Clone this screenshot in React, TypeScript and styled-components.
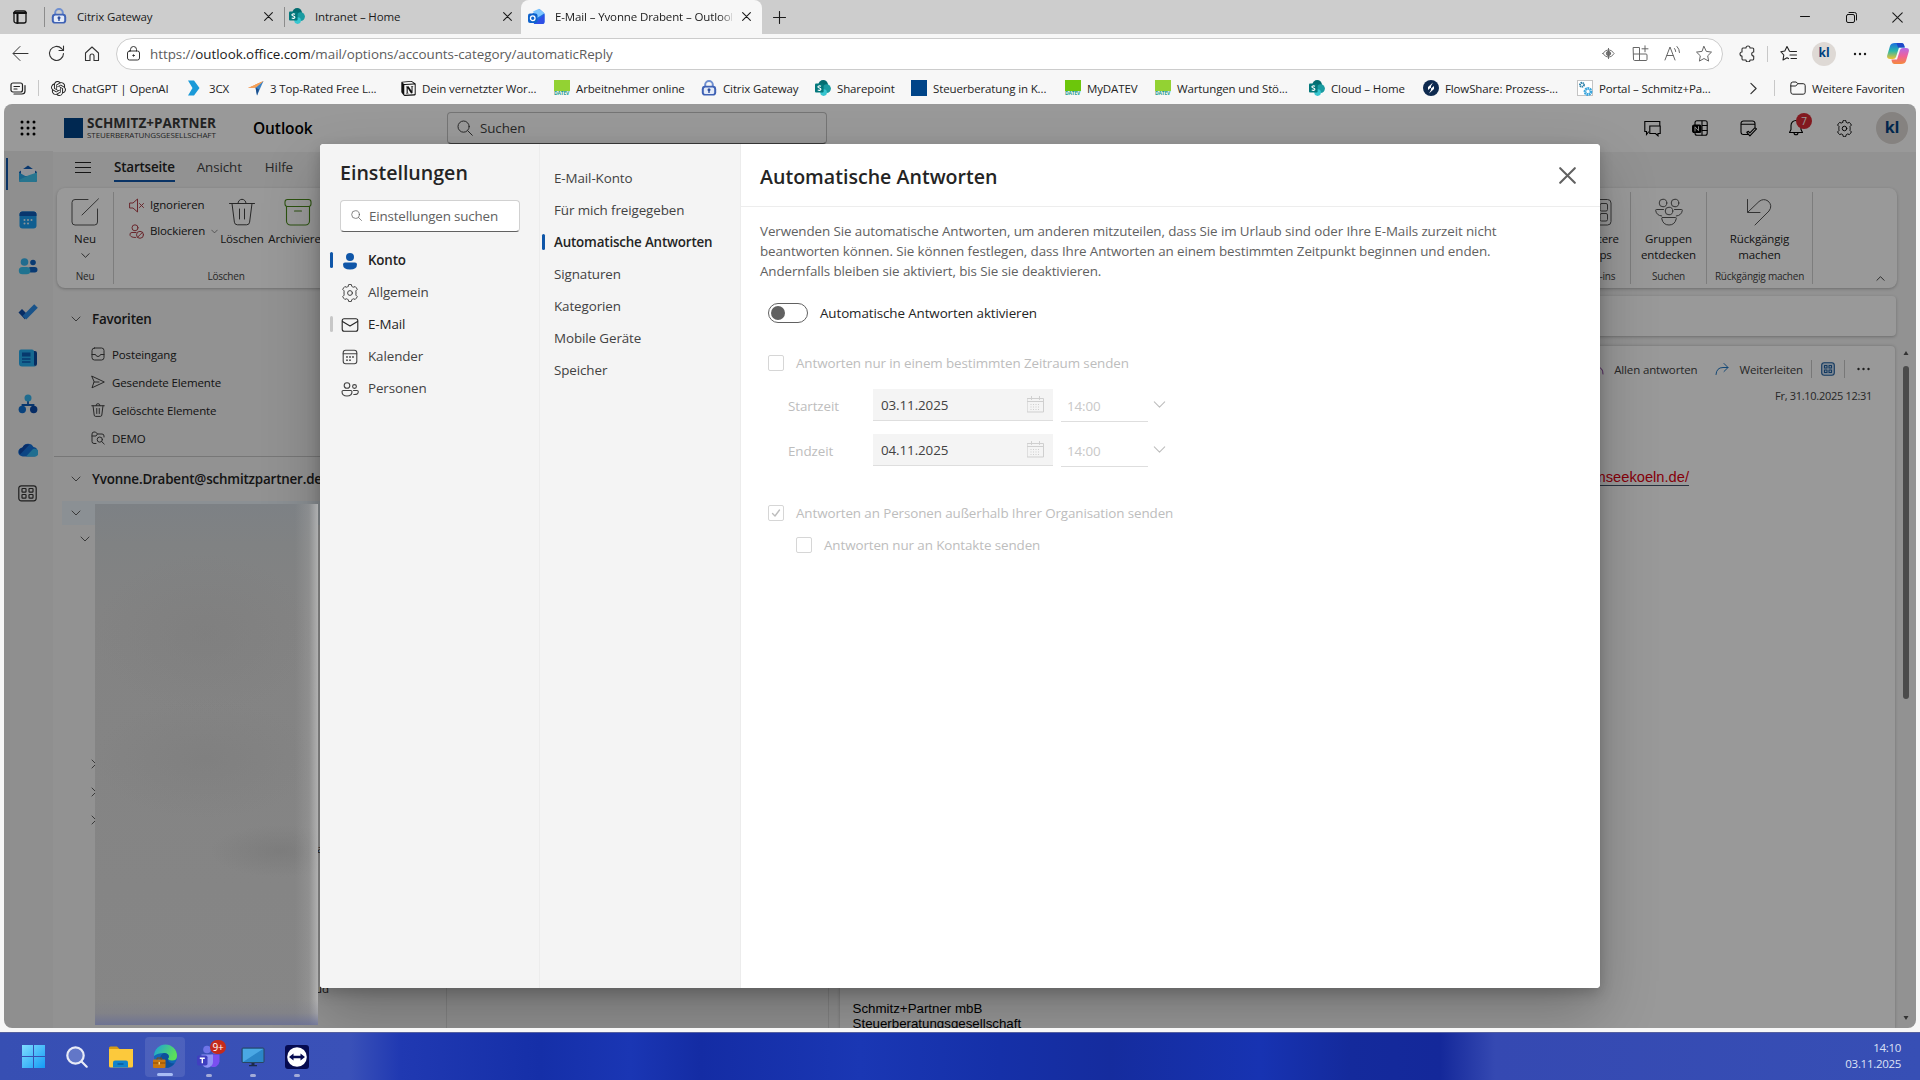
import React from 'react';
import styled, { createGlobalStyle, css } from 'styled-components';
import { SiOpenai, SiNotion } from 'react-icons/si';

const Global = createGlobalStyle`
  *, *::before, *::after { box-sizing: border-box; }
  body { margin: 0; background: #f7f7f7; overflow: hidden; }
  body, button, input {
    font-family: "Open Sans", "Noto Sans", sans-serif;
    font-size: 13.4px;
    letter-spacing: -0.1px;
    color: #242424;
  }
  svg { display: block; flex: none; }
`;

const caption = css`
  font-size: 11.5px;
  letter-spacing: -0.13px;
`;
const strong = css`
  font-weight: 600;
  letter-spacing: -0.18px;
`;

const Page = styled.div`
  width: 1920px;
  height: 1080px;
  display: flex;
  flex-direction: column;
  overflow: hidden;
  white-space: nowrap;
`;

/* ---------- drawing helper ---------- */

type IconProps = { children?: React.ReactNode; w?: number; h?: number; box?: string; color?: string; sw?: number };
const Glyph = ({ children, w = 20, h, box = '0 0 20 20', color = '#242424', sw = 1 }: IconProps) => (
  <svg width={w} height={h ?? w} viewBox={box} fill="none" stroke={color} strokeWidth={sw} strokeLinecap="round" strokeLinejoin="round">
    {children}
  </svg>
);

const GEAR =
  'M8.3 2.6 L8.7 1.5 Q10 1.2 11.3 1.5 L11.8 3.4 Q12.6 3.9 13.3 4.2 L15.2 3.6 Q16.5 4.7 17.300 6.4 L15.8 7.9 Q16 8.8 16 10 Q16 11.2 15.8 12.1 L17.300 13.6 Q16.5 15.3 15.2 16.4 L13.3 15.8 Q12.6 16.3 11.8 16.6 L11.3 18.5 Q10 18.8 8.7 18.5 L8.2 16.6 Q7.4 16.3 6.7 15.8 L4.8 16.4 Q3.5 15.3 2.7 13.6 L4.2 12.1 Q4 11.2 4 10 Q4 8.8 4.2 7.9 L2.7 6.4 Q3.5 4.7 4.8 3.6 L6.7 4.2 Q7.4 3.8 8.2 3.4 Z';

const Gear = ({ w = 20, color = '#242424' }) => (
  <Glyph w={w} color={color} box="1 1 18 18"><path d={GEAR} /><circle cx="10" cy="10" r="2.4" /></Glyph>
);
const Chevron = ({ dir = 'down', w = 10, color = '#616161', sw = 1 }: { dir?: 'down' | 'up' | 'right'; w?: number; color?: string; sw?: number }) => (
  <Glyph w={w} box="0 0 10 10" color={color} sw={sw}>
    <path d={dir === 'down' ? 'M1 3l4 4 4-4' : dir === 'up' ? 'M1 7l4-4 4 4' : 'M3 1l4 4-4 4'} />
  </Glyph>
);
const Cross = ({ w = 9, color = '#1b1b1b', sw = 1.2 }) => (
  <Glyph w={w} box="0 0 10 10" color={color} sw={sw}><path d="M.7.7l8.6 8.6M9.3.7L.7 9.3" /></Glyph>
);
const Magnifier = ({ w = 16, color = '#424242' }) => (
  <Glyph w={w} box="0 0 16 16" color={color}><circle cx="6.6" cy="6.6" r="5.6" /><path d="M10.8 10.8l4.5 4.5" /></Glyph>
);
const Dots = ({ color = '#1b1b1b', w = 14 }) => (
  <svg width={w} height="4" viewBox="0 0 14 4" fill={color}><circle cx="2" cy="2" r="1.2" /><circle cx="7" cy="2" r="1.2" /><circle cx="12" cy="2" r="1.2" /></svg>
);
const Bin = ({ w = 28, color = '#424242', sw = 1 }) => (
  <Glyph w={w} box="0 0 28 28" color={color} sw={sw}>
    <path d="M1.5 5.5h25M10 5.3a4 4 0 0 1 8 0M4 5.5l2.4 18.7a3 3 0 0 0 3 2.6h9.2a3 3 0 0 0 3-2.6L24 5.5M11.5 11v10M16.5 11v10" />
  </Glyph>
);

/* ---------- favicons ---------- */

const CitrixIcon = () => (
  <svg width="16" height="16" viewBox="0 0 16 16">
    <path d="M4.2 7V4.8a3.8 3.8 0 0 1 7.6 0V7" fill="none" stroke="#6f8fd0" strokeWidth="2" />
    <rect x=".8" y="5.8" width="14.4" height="9.8" rx="3.4" fill="#3f62b5" />
    <rect x="2.8" y="7.4" width="10.4" height="6.6" rx="1.6" fill="#e4ebf8" />
    <circle cx="8" cy="9.7" r="1.5" fill="#2f4f9f" /><path d="M7.3 10h1.4v3H7.3z" fill="#2f4f9f" />
  </svg>
);
const SharepointIcon = () => (
  <svg width="16" height="16" viewBox="0 0 16 16">
    <circle cx="8.2" cy="4.8" r="4.8" fill="#036c70" /><circle cx="11.6" cy="8.6" r="4.3" fill="#1a9ba1" /><circle cx="8.6" cy="12.6" r="3.3" fill="#37c6d0" />
    <rect x="0" y="3.6" width="8.6" height="9" rx="1" fill="#03787c" />
    <path d="M6 6.3C4.6 5.5 2.8 5.9 2.9 7c.1 1.2 3 .9 3 2.3 0 1.200-1.900 1.400-3.200.600" fill="none" stroke="#fff" strokeWidth="1.1" />
  </svg>
);
const OutlookIcon = () => (
  <svg width="17" height="17" viewBox="0 0 17 17">
    <path d="M4 6l7.500-5 5 4.500v8.500a2 2 0 0 1-2 2H6z" fill="#1c6fe0" />
    <path d="M5 3.500L11 .8l5.500 4.500L9 10z" fill="#7fc6ff" />
    <path d="M16.500 6v8a2 2 0 0 1-2 2H6z" fill="#2f4fe6" />
    <rect x="0" y="5.500" width="9.500" height="9.500" rx="2" fill="#0f63cc" />
    <circle cx="4.750" cy="10.250" r="2.300" fill="none" stroke="#fff" strokeWidth="1.300" />
  </svg>
);
const TcxIcon = () => (
  <svg width="16" height="16" viewBox="0 0 16 16"><path d="M1 .5h6L12.500 8 7 15.500H1L5.500 8z" fill="#1b9ad8" /></svg>
);
const PlaneIcon = () => (
  <svg width="16" height="16" viewBox="0 0 16 16"><path d="M0 8L15.500 1 8 7.500z" fill="#f07b34" /><path d="M15.500 1L9 15.500 7.500 7.500z" fill="#3b82c4" /><path d="M0 8l8-.5L15.500 1z" fill="#f4a259" /><path d="M7.500 7.500L9 15.500l2-6z" fill="#1d4f8c" /></svg>
);
const DatevMark = styled.span<{ $c: string }>`
  width: 16px;
  height: 16px;
  flex: none;
  display: flex;
  flex-direction: column;
  font-size: 5px;
  letter-spacing: -.2px;
  font-weight: 700;
  line-height: 5px;
  color: #1f9a8f;
  &::before { content: ''; height: 11px; background: ${p => p.$c}; }
`;
const BlueSquare = styled.span<{ $w?: number; $h?: number }>`
  width: ${p => p.$w ?? 16}px;
  height: ${p => p.$h ?? 16}px;
  flex: none;
  background: #004488;
`;
const FlowIcon = () => (
  <svg width="16" height="16" viewBox="0 0 16 16"><circle cx="8" cy="8" r="8" fill="#0e2a4f" /><path d="M10 2.500L5 7v3l3-2.500V10l-2 3.500 5-4.500V6L8 8.500V6z" fill="#fff" /></svg>
);
const PortalIcon = () => (
  <svg width="16" height="16" viewBox="0 0 16 16"><rect x=".5" y=".5" width="15" height="15" fill="#fff" stroke="#c4c4c4" /><circle cx="5" cy="4.800" r="2" fill="none" stroke="#2b7fa8" strokeWidth="1.900" strokeDasharray="1.300 .5" /><circle cx="11" cy="11.500" r="3" fill="none" stroke="#3aa6dd" strokeWidth="2.800" strokeDasharray="1.700 .5" /></svg>
);

/* ---------- browser chrome ---------- */

const TabStrip = styled.div`
  height: 34px;
  flex: none;
  display: flex;
  align-items: stretch;
  background: #cdcdcd;
`;
const Cell = styled.div<{ $w: number }>`
  width: ${p => p.$w}px;
  flex: none;
  display: flex;
  align-items: center;
  justify-content: center;
`;
const VLine = styled.i<{ $h: number; $c?: string; $m?: string }>`
  width: 1px;
  height: ${p => p.$h}px;
  flex: none;
  align-self: center;
  background: ${p => p.$c ?? '#c8c8c8'};
  margin: ${p => p.$m ?? '0'};
`;
const Tab = styled.div<{ $w: number; $active?: boolean; $pl?: number; $pr?: number }>`
  width: ${p => p.$w}px;
  display: flex;
  align-items: center;
  gap: 10px;
  padding: 0 ${p => p.$pr ?? 11}px 2px ${p => p.$pl ?? 6}px;
  ${caption}
  color: #1b1b1b;
  ${p => p.$active && css`
    background: #f7f7f7;
    border-radius: 8px 8px 0 0;
  `}
`;
const TabTitle = styled.span<{ $fade?: boolean }>`
  flex: 1;
  min-width: 0;
  overflow: hidden;
  ${p => p.$fade && css`mask-image: linear-gradient(90deg, #000 164px, transparent 182px);`}
`;
const Grow = styled.div`flex: 1;`;

const Toolbar = styled.div`
  height: 39px;
  flex: none;
  display: flex;
  align-items: center;
  padding: 0 2px;
`;
const AddressBar = styled.div`
  width: 1607px;
  height: 32px;
  margin: 0 6px;
  padding-right: 2px;
  display: flex;
  align-items: center;
  background: #fff;
  border: 1px solid #cccccc;
  border-radius: 16px;
  letter-spacing: -0.04px;
  color: #5c5c5c;
  & > b { font-weight: 400; color: #1b1b1b; }
`;
const Avatar = styled.span<{ $s: number }>`
  width: ${p => p.$s}px;
  height: ${p => p.$s}px;
  border-radius: 50%;
  display: flex;
  align-items: center;
  justify-content: center;
  padding-bottom: 2px;
  background: #ded9d5;
  color: #004080;
  font-size: ${p => p.$s / 2}px;
  font-weight: 700;
`;

const BookmarkBar = styled.div`
  height: 31px;
  flex: none;
  display: flex;
  align-items: center;
  padding-bottom: 1px;
  ${caption}
`;
const Bookmark = styled.div<{ $w: number }>`
  width: ${p => p.$w}px;
  flex: none;
  display: flex;
  align-items: center;
  gap: 6px;
`;

const bookmarks: [string, number, React.ReactNode][] = [
  ['ChatGPT | OpenAI', 136, <SiOpenai size={15} color="#222" />],
  ['3CX', 61, <TcxIcon />],
  ['3 Top-Rated Free L...', 153, <PlaneIcon />],
  ['Dein vernetzter Wor...', 153, <SiNotion size={15} color="#111" />],
  ['Arbeitnehmer online', 147, <DatevMark $c="#93d233">DATEV</DatevMark>],
  ['Citrix Gateway', 114, <CitrixIcon />],
  ['Sharepoint', 96, <SharepointIcon />],
  ['Steuerberatung in K...', 154, <BlueSquare />],
  ['MyDATEV', 90, <DatevMark $c="#6cc60b">DATEV</DatevMark>],
  ['Wartungen und Stö...', 154, <DatevMark $c="#93d233">DATEV</DatevMark>],
  ['Cloud – Home', 114, <SharepointIcon />],
  ['FlowShare: Prozess-...', 154, <FlowIcon />],
  ['Portal – Schmitz+Pa...', 166, <PortalIcon />],
];

const Browser = () => (
  <>
    <TabStrip>
      <Cell $w={40}><Glyph w={14} box="0 0 14 14" color="#111" sw={1.3}><rect x="1" y="1" width="12" height="12" rx="2" /><path d="M1 3h12M4.500 4v9" strokeWidth="2" /></Glyph></Cell>
      <VLine $h={20} $c="#8c8c8c" $m="0 0 0 4px" />
      <Tab $w={239}><CitrixIcon /><TabTitle>Citrix Gateway</TabTitle><Cross /></Tab>
      <VLine $h={20} $c="#8c8c8c" />
      <Tab $w={236} $pl={4} $pr={9}><SharepointIcon /><TabTitle>Intranet – Home</TabTitle><Cross /></Tab>
      <Tab $w={241} $active $pl={7}><OutlookIcon /><TabTitle $fade>E-Mail – Yvonne Drabent – Outlook</TabTitle><Cross /></Tab>
      <Cell $w={34}><Glyph w={13} box="0 0 13 13" color="#1b1b1b" sw={1.100}><path d="M6.500 .5v12M.5 6.500h12" /></Glyph></Cell>
      <Grow />
      <Cell $w={46}><Glyph w={10} box="0 0 10 10" color="#111"><path d="M.5 4.500h9" /></Glyph></Cell>
      <Cell $w={46}><Glyph w={11} box="0 0 11 11" color="#111"><rect x=".5" y="2.500" width="8" height="8" rx="1.500" /><path d="M3 .5h5.500a2 2 0 0 1 2 2V8" /></Glyph></Cell>
      <Cell $w={46}><Cross w={11} sw={1} /></Cell>
    </TabStrip>
    <Toolbar>
      <Cell $w={36}><Glyph w={17} box="0 0 17 17" color="#333"><path d="M16 8.500H1.500M8 1.500l-7 7 7 7" /></Glyph></Cell>
      <Cell $w={36}><Glyph w={17} box="0 0 17 17" color="#333" sw={1.100}><path d="M15.500 8.500a7 7 0 1 1-2-5l1.800 2M15.500 1v4.500H11" /></Glyph></Cell>
      <Cell $w={36}><Glyph w={16} box="0 0 16 16" color="#333" sw={1.100}><path d="M1.500 7L8 1l6.500 6v7.500H10V10a2 2 0 0 0-4 0v4.500H1.500z" /></Glyph></Cell>
      <AddressBar>
        <Cell $w={33}><Glyph w={15} box="0 0 15 15" color="#333"><rect x="1.500" y="5" width="12" height="9" rx="2" /><path d="M4.500 5V3.500a3 3 0 0 1 6 0V5" /><circle cx="7.500" cy="9.500" r=".7" fill="#333" /></Glyph></Cell>
        <span>https://</span><b>outlook.office.com</b><span>/mail/options/accounts-category/automaticReply</span>
        <Grow />
        <Cell $w={32}><Glyph w={13} box="0 0 14 14" color="#666"><path d="M1 7q2.500-4 6-4t6 4q-2.500 4-6 4T1 7z" /><circle cx="7" cy="7" r="2.300" fill="#777" /><path d="M7 1.500v11" /></Glyph></Cell>
        <Cell $w={32}><Glyph w={17} box="0 0 17 17" color="#666"><path d="M1.500 2.500h6v13h-5a1 1 0 0 1-1-1zM1.500 9H14a1 1 0 0 1 1 1v4.500a1 1 0 0 1-1 1H7.500M13 .8v6M10 3.800h6" /></Glyph></Cell>
        <Cell $w={32}><Glyph w={17} box="0 0 17 17" color="#666"><path d="M1 15L6 2l5 13M2.800 10.500h6.400M10.500 3.500q1.200 1.500 1.200 3M13 1.500q2.500 2.500 2.500 6" /></Glyph></Cell>
        <Cell $w={32}><Glyph w={18} box="0 0 18 18" color="#666"><path d="M9 1.500l2.300 4.900 5.200.7-3.800 3.700.9 5.300L9 13.500l-4.600 2.600.9-5.300L1.500 7.100l5.200-.7z" /></Glyph></Cell>
      </AddressBar>
      <Cell $w={36}><Glyph w={17} box="0 0 17 17" color="#333" sw={1.100}><path d="M4 3h3a2 2 0 0 1 4 0h2.500a1.200 1.200 0 0 1 1.200 1.200V7a2 2 0 0 0 0 4v2.800a1.200 1.200 0 0 1-1.200 1.200H11a2 2 0 0 1-4 0H4.200A1.200 1.200 0 0 1 3 13.800V11a2 2 0 0 1 0-4V4.200A1.200 1.200 0 0 1 4 3z" /></Glyph></Cell>
      <VLine $h={16} $m="0 2px" />
      <Cell $w={36}><Glyph w={17} box="0 0 17 17" color="#222" sw={1.100}><path d="M11 6.500l-1.500-.3L7 1.500 4.800 6 .8 6.700l3 3.300-.8 5 4-2.200 1.500.8M11 6.500h5.500M10 10h6.500M11 13.500h5.500" /></Glyph></Cell>
      <Cell $w={36}><Avatar $s={24}>kl</Avatar></Cell>
      <Cell $w={36}><Dots /></Cell>
      <Cell $w={40}>
        <svg width="22" height="21" viewBox="0 0 22 21">
          <defs>
            <linearGradient id="cpA" x1="0" y1="0" x2="0" y2="1"><stop offset="0" stopColor="#1b6fe0" /><stop offset=".5" stopColor="#2bb8a8" /><stop offset="1" stopColor="#f2c330" /></linearGradient>
            <linearGradient id="cpB" x1="0" y1="0" x2="0" y2="1"><stop offset="0" stopColor="#b36be8" /><stop offset=".5" stopColor="#f0609a" /><stop offset="1" stopColor="#f58a3c" /></linearGradient>
          </defs>
          <path d="M8 0h6.500q2 0 2.500 2l.8 2.500H12L9 14q-.6 2-3 2H3q-3.500 0-2.800-3.500L3 3q.8-3 5-3z" fill="url(#cpA)" />
          <path d="M14 21H7.500q-2-.2-2.500-2l-.6-2.500H10L13 7q.6-2 3-2h3q3.500 0 2.800 3.500L19 18q-.8 3-5 3z" fill="url(#cpB)" />
          <path d="M9.500 0h5q2 0 2.500 2l.8 2.500H11z" fill="#1e49c8" />
        </svg>
      </Cell>
    </Toolbar>
    <BookmarkBar>
      <Cell $w={36}><Glyph w={16} box="0 0 16 16" color="#222" sw={1.200}><rect x="1" y="3" width="11.500" height="9" rx="2" /><path d="M4 6.500h5.500M4 9h3M4 14h8q3 0 3-3V5.500" /></Glyph></Cell>
      <VLine $h={16} $m="0 12px 0 2px" />
      {bookmarks.map(([t, w, icon]) => <Bookmark key={t} $w={w}>{icon}{t}</Bookmark>)}
      <Cell $w={20}><Chevron dir="right" w={13} color="#333" sw={.9} /></Cell>
      <VLine $h={16} $m="0 15px 0 11px" />
      <Bookmark $w={116}><Glyph w={16} box="0 0 16 16" color="#222"><path d="M.8 4q0-2 2-2h3.400l1.600 1.700h5.400q2 0 2 2v6.500q0 2-2 2H2.800q-2 0-2-2zM.8 6h5l2-2.300" /></Glyph>Weitere Favoriten</Bookmark>
    </BookmarkBar>
  </>
);

/* ---------- Outlook page ---------- */

const AppFrame = styled.div`
  position: relative;
  height: 924px;
  flex: none;
  margin: 0 4px;
  display: flex;
  flex-direction: column;
  overflow: hidden;
  border-radius: 8px;
  background: #f3f3f3;
`;
const Shade = styled.div`
  position: absolute;
  inset: 0;
  background: rgba(0, 0, 0, .4);
`;
const Header = styled.div`
  height: 48px;
  flex: none;
  display: flex;
  align-items: center;
  background: #fff;
`;
const Logo = styled.div`
  display: flex;
  align-items: center;
  gap: 4px;
  width: 189px;
  margin-left: 13px;
`;
const LogoText = styled.div`
  display: flex;
  flex-direction: column;
  color: #3a3a3a;
`;
const LogoName = styled.b`
  font-size: 13.5px;
  line-height: 13px;
  letter-spacing: 0;
`;
const LogoSub = styled.span`
  font-size: 8px;
  line-height: 9px;
  letter-spacing: -0.08px;
`;
const Product = styled.span`
  width: 194px;
  font-size: 15.5px;
  font-weight: 600;
  color: #000;
`;
const GlobalSearch = styled.div`
  width: 380px;
  height: 32px;
  display: flex;
  align-items: center;
  gap: 7px;
  padding-left: 9px;
  border: 1px solid #c4c4c4;
  border-bottom-color: #616161;
  border-radius: 4px;
  color: #424242;
`;
const Bell = styled.div`position: relative;`;
const Badge = styled.span`
  position: absolute;
  left: 8px;
  top: -6px;
  width: 16px;
  height: 16px;
  border-radius: 50%;
  display: flex;
  align-items: center;
  justify-content: center;
  background: #d92b35;
  color: #fff;
  font-size: 10px;
`;

const AppBody = styled.div`
  flex: 1;
  min-height: 0;
  display: flex;
`;
const Rail = styled.nav`
  width: 49px;
  flex: none;
  margin-top: -1px;
  display: flex;
  flex-direction: column;
  background: #efefef;
`;
const RailItem = styled.div<{ $on?: boolean; $h?: number }>`
  height: ${p => p.$h ?? 46}px;
  display: flex;
  align-items: center;
  padding-left: 14px;
  ${p => p.$on && css`
    height: 32px;
    margin: 7px 0 7px 2px;
    padding-left: 10px;
    border-left: 2px solid #0f56a8;
  `}
`;

const Workspace = styled.div`
  flex: 1;
  min-width: 0;
  display: flex;
  flex-direction: column;
`;
const MenuRow = styled.div`
  height: 36px;
  flex: none;
  display: flex;
  padding: 0 0 4px 22px;
`;
const MenuTab = styled.span<{ $on?: boolean; $ml: number }>`
  display: flex;
  align-items: center;
  height: 30px;
  margin-left: ${p => p.$ml}px;
  color: #424242;
  ${p => p.$on && css`
    padding-top: 2px;
    ${strong}
    color: #242424;
    border-bottom: 2px solid #0f56a8;
  `}
`;
const Ribbon = styled.div`
  width: 1840px;
  height: 100px;
  flex: none;
  margin-left: 4px;
  display: flex;
  align-items: stretch;
  background: #fff;
  border-radius: 8px;
  padding: 4px 0;
  box-shadow: 0 1px 3px rgba(0, 0, 0, .25);
`;
const RibbonGroup = styled.div<{ $w: number; $plain?: boolean }>`
  width: ${p => p.$w}px;
  flex: none;
  display: flex;
  flex-direction: column;
  align-items: center;
  justify-content: space-between;
  padding: 6px 0 1px;
  border-right: 1px solid ${p => (p.$plain ? 'transparent' : '#d1d1d1')};
  font-size: 10px;
  letter-spacing: -0.22px;
  line-height: 14px;
  color: #424242;
`;
const Commands = styled.div<{ $pl?: number }>`
  display: flex;
  align-items: flex-start;
  align-self: stretch;
  padding-left: ${p => p.$pl ?? 0}px;
`;
const BigCommand = styled.div<{ $w?: number }>`
  width: ${p => (p.$w ? p.$w + 'px' : 'auto')};
  flex: none;
  display: flex;
  flex-direction: column;
  align-items: center;
  ${caption}
  line-height: 16px;
  text-align: center;
  color: #242424;
  & > svg { margin-bottom: 5px; }
  & > svg + span + svg { margin-top: 4px; }
`;
const SmallCommands = styled.div`
  width: 88px;
  flex: none;
  display: flex;
  flex-direction: column;
  margin-top: -6px;
  ${caption}
  color: #242424;
`;
const SmallCommand = styled.div`
  height: 26px;
  display: flex;
  align-items: center;
  gap: 6px;
`;

const Panes = styled.div`
  flex: 1;
  min-height: 0;
  display: flex;
`;
const Folders = styled.div`
  width: 394px;
  display: flex;
  flex-direction: column;
  padding-top: 10px;
  border-right: 1px solid #dcdcdc;
`;
const FolderHead = styled.div<{ $h: number }>`
  height: ${p => p.$h}px;
  flex: none;
  display: flex;
  align-items: center;
  gap: 11px;
  padding-left: 18px;
  ${strong}
`;
const FolderRow = styled.div<{ $pl: number; $h?: number; $sel?: boolean }>`
  height: ${p => p.$h ?? 28}px;
  flex: none;
  display: flex;
  align-items: center;
  gap: 7px;
  padding-left: ${p => p.$pl}px;
  ${caption}
  ${p => p.$sel && css`
    margin-left: 9px;
    background: #e8f0f7;
  `}
`;
const Spacer = styled.div<{ $h: number }>`
  height: ${p => p.$h}px;
  flex: none;
`;
const Rule = styled.div`
  height: 1px;
  flex: none;
  margin: 4px 0 0 1px;
  background: #c7c7c7;
`;
const MessageList = styled.div`
  width: 382px;
  border-right: 1px solid #dcdcdc;
`;
const Reading = styled.div`
  width: 1057px;
  margin: 8px 0 0 11px;
  display: flex;
  flex-direction: column;
`;
const SubjectBar = styled.div`
  height: 40px;
  flex: none;
  margin-bottom: 10px;
  background: #fff;
  border-radius: 4px;
  box-shadow: 0 1px 3px rgba(0, 0, 0, .25);
`;
const Mail = styled.div`
  flex: 1;
  min-height: 0;
  margin-right: 1px;
  display: flex;
  flex-direction: column;
  background: #fff;
  border-radius: 4px 4px 0 0;
  box-shadow: 0 0 3px rgba(0, 0, 0, .25);
  overflow: hidden;
`;
const MailActions = styled.div`
  height: 20px;
  margin: 13px 24px 0 0;
  display: flex;
  align-items: center;
  justify-content: flex-end;
  ${caption}
  color: #424242;
`;
const MailAction = styled.span<{ $mr: number }>`
  display: flex;
  align-items: center;
  gap: 10px;
  margin-right: ${p => p.$mr}px;
`;
const MailDate = styled.div`
  margin: 9px 23px 0 0;
  text-align: right;
  font-size: 11px;
  letter-spacing: -0.3px;
  line-height: 16px;
  color: #424242;
`;
const MailLink = styled.div`
  margin: 63px 206px 0 0;
  text-align: right;
  font-family: "Liberation Sans", Arial, sans-serif;
  font-size: 14.7px;
  letter-spacing: 0;
  line-height: 20px;
  color: #e0000f;
  & > span { border-bottom: 1px solid #44546a; }
`;
const Signature = styled.div`
  margin: auto 0 -3px 13px;
  font-family: "Liberation Sans", Arial, sans-serif;
  font-size: 13.3px;
  letter-spacing: 0;
  line-height: 15px;
  color: #000;
`;
const Scroll = styled.div`
  width: 20px;
  padding: 62px 0 7px 7px;
  display: flex;
  flex-direction: column;
  gap: 10px;
`;
const ScrollThumb = styled.div`
  width: 6px;
  height: 333px;
  border-radius: 3px;
  background: #7d7d7d;
`;

const RailIcon = ({ children }: { children: React.ReactNode }) => <svg width="20" height="20" viewBox="0 0 20 20">{children}</svg>;

const Outlook = () => (
  <>
    <Header>
      <Cell $w={47}><svg width="16" height="16" viewBox="0 0 16 16">{[2, 8, 14].map(y => [2, 8, 14].map(x => <circle key={x + '-' + y} cx={x} cy={y} r="1.500" fill="#000" />))}</svg></Cell>
      <Logo>
        <BlueSquare $w={19} $h={20} />
        <LogoText><LogoName>SCHMITZ+PARTNER</LogoName><LogoSub>STEUERBERATUNGSGESELLSCHAFT</LogoSub></LogoText>
      </Logo>
      <Product>Outlook</Product>
      <GlobalSearch><Magnifier />Suchen</GlobalSearch>
      <Grow />
      <Cell $w={48}><Glyph w={17} box="0 0 17 17" color="#000" sw={1.100}><path d="M4.500 12L2.500 14.500V11.500H.8v-10h15V5M5.800 6h10.400v7.500H14v2.200l-2.500-2.200H5.800z" strokeLinejoin="miter" /></Glyph></Cell>
      <Cell $w={48}><Glyph w={16} box="0 0 16 16" color="#000" sw={1.100}><rect x="3" y=".8" width="12.200" height="14.400" rx="2" /><path d="M10 5.500h5M10 10.500h5M10 1v14" /><rect x=".6" y="5" width="8.400" height="7.500" rx="1.500" fill="#000" /><path d="M3 11V6.800l3.500 3.900V6.600" stroke="#fff" strokeWidth=".9" /></Glyph></Cell>
      <Cell $w={48}><Glyph w={17} box="0 0 17 17" color="#000" sw={1.100}><path d="M8.500 14.500H3.500a2.500 2.500 0 0 1-2.500-2.500V3.500A2.500 2.500 0 0 1 3.500 1h9A2.500 2.500 0 0 1 15 3.500V7M1 4.200h14M6.800 12.300l1.600-1 1.500 1.500L15 7.700l1.500 1.200-6.600 7z" /></Glyph></Cell>
      <Cell $w={48}><Bell><Glyph w={16} h={18} box="0 0 16 18" color="#000" sw={1.100}><path d="M8 1.500a5 5 0 0 0-5 5v4L1.500 13.500h13L13 10.500v-4a5 5 0 0 0-5-5zM6 13.800a2 2 0 0 0 4 0" /></Glyph><Badge>7</Badge></Bell></Cell>
      <Cell $w={48}><Gear w={17} color="#000" /></Cell>
      <Cell $w={48}><Avatar $s={32}>kl</Avatar></Cell>
    </Header>
    <AppBody>
      <Rail>
        <RailItem $on><RailIcon><path d="M1 8l9-6.500L19 8v8a2 2 0 0 1-2 2H3a2 2 0 0 1-2-2z" fill="#0f5db8" /><path d="M3 5h14v7H3z" fill="#f2f6ff" /><path d="M1 8.500l9 5 9-5V16a2 2 0 0 1-2 2H3a2 2 0 0 1-2-2z" fill="#2aa7e8" /><path d="M1 16l9-4.500 9-3V16a2 2 0 0 1-2 2H3a2 2 0 0 1-2-2z" fill="#41c4ee" /></RailIcon></RailItem>
        <RailItem><RailIcon><rect x="1.500" y="1.500" width="17" height="17" rx="3" fill="#1b9df0" /><path d="M4.500 1.500h11a3 3 0 0 1 3 3V6h-17V4.500a3 3 0 0 1 3-3z" fill="#0f5db8" /><g fill="#e6f6ff"><circle cx="6.500" cy="10" r="1" /><circle cx="10" cy="10" r="1" /><circle cx="13.500" cy="10" r="1" /><circle cx="6.500" cy="13.500" r="1" /><circle cx="10" cy="13.500" r="1" /></g></RailIcon></RailItem>
        <RailItem><RailIcon><circle cx="6.500" cy="6" r="3.800" fill="#36b5ee" /><circle cx="15" cy="6.500" r="2.800" fill="#0f62c0" /><rect x="10" y="11" width="9.500" height="5.500" rx="2.700" fill="#0f62c0" /><rect x=".8" y="11" width="11.500" height="7.300" rx="3.600" fill="#36c0f0" /></RailIcon></RailItem>
        <RailItem><RailIcon><path d="M.5 10.500L4 7l4 4-1 6.500z" fill="#0c4ca8" /><path d="M4.500 14L16.200 2.300 19.800 5.800 8.200 17.600z" fill="#2b8be6" /></RailIcon></RailItem>
        <RailItem><RailIcon><path d="M14 3h3a2 2 0 0 1 2 2v11a2 2 0 0 1-4 0z" fill="#0b4aa0" /><path d="M3 1.500h11a2 2 0 0 1 2 2v13a2 2 0 0 0 2 2H4a3 3 0 0 1-3-3v-12a2 2 0 0 1 2-2z" fill="#25aef0" /><path d="M4 4.500h8.500v4H4z" fill="#0b5fb8" /><path d="M4 11h8.500M4 14h8.500" stroke="#0b5fb8" strokeWidth="1.300" /></RailIcon></RailItem>
        <RailItem><RailIcon><path d="M10 7v4M4.500 14v-3h11v3" stroke="#0f5db8" strokeWidth="1.800" fill="none" /><circle cx="10" cy="4" r="3.500" fill="#36b5ee" /><circle cx="4.300" cy="15.500" r="3.700" fill="#0f6fd0" /><circle cx="15.700" cy="15.500" r="3.700" fill="#0b4aa8" /></RailIcon></RailItem>
        <RailItem><RailIcon><path d="M5 16.500a4.500 4.500 0 0 1-.5-9 6 6 0 0 1 11-.5 4.800 4.800 0 0 1 0 9.500z" fill="#1573dc" /><path d="M8 16.500l7-7.500a4 4 0 1 1 .5 7.500z" fill="#36b8f0" /><path d="M4.500 7.500a6 6 0 0 1 7-3L2 14.500a4.500 4.500 0 0 1 2.500-7z" fill="#0c4bb0" /></RailIcon></RailItem>
        <RailItem $h={41}><Glyph w={19} h={17} box="0 0 19 17" color="#333" sw={1.200}><rect x=".8" y=".8" width="17.400" height="15" rx="2.500" /><rect x="4" y="3.500" width="4" height="3.700" rx=".6" /><rect x="11" y="3.500" width="4" height="3.700" rx=".6" /><rect x="4" y="9.500" width="4" height="3.700" rx=".6" /><rect x="11" y="9.500" width="4" height="3.700" rx=".6" /></Glyph></RailItem>
      </Rail>
      <Workspace>
        <MenuRow>
          <Cell $w={16}><Glyph w={16} h={12} box="0 0 16 12"><path d="M0 .5h16M0 5.500h16M0 10.500h16" /></Glyph></Cell>
          <MenuTab $on $ml={23}>Startseite</MenuTab>
          <MenuTab $ml={22}>Ansicht</MenuTab>
          <MenuTab $ml={23}>Hilfe</MenuTab>
        </MenuRow>
        <Ribbon>
          <RibbonGroup $w={57}>
            <BigCommand>
              <Glyph w={28} box="0 0 28 28" color="#555" sw={1}><path d="M17 1.500H4A3 3 0 0 0 1 4.500V24a3 3 0 0 0 3 3h19.500a3 3 0 0 0 3-3V11M11 17L27.500 .8" /></Glyph>
              <span>Neu</span>
              <Chevron w={9} color="#333" />
            </BigCommand>
            <span>Neu</span>
          </RibbonGroup>
          <RibbonGroup $w={225} $plain>
            <Commands $pl={15}>
              <SmallCommands>
                <SmallCommand><Glyph w={15} box="0 0 15 15" color="#b0404a"><path d="M1 5h3l4.500-4v13L4 10H1zM10.500 5.500l4 4M14.500 5.500l-4 4" /></Glyph>Ignorieren</SmallCommand>
                <SmallCommand><Glyph w={15} box="0 0 15 15" color="#b0404a"><circle cx="6" cy="3.800" r="3" /><path d="M6.500 13.500q-6 0-5.500-3.500.2-1.500 2-1.500h4" /><circle cx="11" cy="10.800" r="3.500" /><path d="M8.600 13.200l4.800-4.800" /></Glyph>Blockieren<Chevron w={7} /></SmallCommand>
              </SmallCommands>
              <BigCommand $w={50}><Bin /><span>Löschen</span></BigCommand>
              <BigCommand $w={62}><Glyph w={28} box="0 0 28 28" color="#4b8a1c" sw={1.100}><rect x="1" y="1.500" width="26" height="7" rx="2.500" /><path d="M2.500 8.500V23a4 4 0 0 0 4 4h15a4 4 0 0 0 4-4V8.500M10.500 13h7" /></Glyph><span>Archivieren</span></BigCommand>
            </Commands>
            <span>Löschen</span>
          </RibbonGroup>
          <Grow />
          <RibbonGroup $w={64}>
            <BigCommand><Glyph w={28} box="0 0 28 28" color="#555"><rect x="1" y="1.500" width="26" height="25.500" rx="3.500" /><rect x="5.500" y="5.500" width="7.500" height="7.500" rx="1.500" /><rect x="16" y="5.500" width="7.500" height="7.500" rx="1.500" /><rect x="5.500" y="15.500" width="7.500" height="7.500" rx="1.500" /><rect x="16" y="15.500" width="7.500" height="7.500" rx="1.500" /></Glyph><span>Weitere<br />Apps</span></BigCommand>
            <span>Add-ins</span>
          </RibbonGroup>
          <RibbonGroup $w={76}>
            <BigCommand><Glyph w={28} box="0 0 28 28" color="#555"><circle cx="8" cy="5" r="3.800" /><circle cx="20" cy="5" r="3.800" /><circle cx="14" cy="13" r="3.800" /><path d="M8.500 11.500H1.500q-1 0-.8 1 .8 5 6 5.500M19.500 11.500h7q1 0 .8 1-.8 5-6 5.500M7.500 19.500h13q1 0 .8 1Q20 27 14 27t-7.300-6.500q-.2-1 .8-1z" /></Glyph><span>Gruppen<br />entdecken</span></BigCommand>
            <span>Suchen</span>
          </RibbonGroup>
          <RibbonGroup $w={106}>
            <BigCommand><Glyph w={28} box="0 0 28 28" color="#555"><path d="M2.500 1.500v13h12.500M2.800 14.200L14 3.500Q18.500 0 23 3q5 4.500 1 10L10 27" /></Glyph><span>Rückgängig<br />machen</span></BigCommand>
            <span>Rückgängig machen</span>
          </RibbonGroup>
          <RibbonGroup $w={84} $plain><Grow /><Commands $pl={63}><Chevron dir="up" w={9} color="#333" /></Commands></RibbonGroup>
        </Ribbon>
        <Panes>
          <Folders>
            <FolderHead $h={42}><Chevron />Favoriten</FolderHead>
            <FolderRow $pl={38}><Glyph w={14} box="0 0 14 14" color="#424242"><rect x="1" y="1" width="12" height="12" rx="2.500" /><path d="M1 7.500h3.500q.5 2 2.500 2t2.500-2H13" /></Glyph>Posteingang</FolderRow>
            <FolderRow $pl={38}><Glyph w={14} box="0 0 14 14" color="#424242"><path d="M1 1.200L13.300 7 1 12.800 3 7zM3 7h5" /></Glyph>Gesendete Elemente</FolderRow>
            <FolderRow $pl={38}><Bin w={14} sw={2} />Gelöschte Elemente</FolderRow>
            <FolderRow $pl={38}><Glyph w={14} box="0 0 14 14" color="#424242"><path d="M5 12.500H3a2 2 0 0 1-2-2V3a2 2 0 0 1 2-2h1.500l2 2H11a2 2 0 0 1 2 2v1M1 5h4l1.500-2" /><circle cx="8.800" cy="8.600" r="2.600" /><path d="M10.700 10.600L13.200 13" /></Glyph>DEMO</FolderRow>
            <Rule />
            <FolderHead $h={44}><Chevron />Yvonne.Drabent@schmitzpartner.de</FolderHead>
            <FolderRow $pl={9} $h={24} $sel><Chevron /><Cell $w={28}><Glyph w={16} color="#111" sw={2}><path d="M3 8l7-5 7 5v9H3zM3 9l7 5 7-5" /></Glyph></Cell></FolderRow>
            <FolderRow $pl={27}><Chevron /></FolderRow>
            <Spacer $h={197} />
            <FolderRow $pl={36}><Chevron dir="right" /></FolderRow>
            <FolderRow $pl={36}><Chevron dir="right" /></FolderRow>
            <FolderRow $pl={36}><Chevron dir="right" /></FolderRow>
            <FolderRow $pl={264}>a</FolderRow>
            <Spacer $h={112} />
            <FolderRow $pl={262}>ud</FolderRow>
          </Folders>
          <MessageList />
          <Reading>
            <SubjectBar />
            <Mail>
              <MailActions>
                <MailAction $mr={18}><Glyph w={14} box="0 0 14 14" color="#8a3fa0"><path d="M5 1L1 5l4 4M1 5h6q6 0 6 7" /></Glyph>Allen antworten</MailAction>
                <MailAction $mr={8}><Glyph w={14} box="0 0 14 14" color="#1f77c4"><path d="M9 1.500l4 4-4 4M13 5.500H8q-6.500 0-7 7" /></Glyph>Weiterleiten</MailAction>
                <VLine $h={18} />
                <Cell $w={32}><Glyph w={14} box="0 0 14 14" color="#1f5fa0" sw={1.100}><rect x=".7" y=".7" width="12.600" height="12.600" rx="2.500" fill="#cfe0f2" /><rect x="3.500" y="3.500" width="2.500" height="2.500" /><rect x="8" y="3.500" width="2.500" height="2.500" /><rect x="3.500" y="8" width="2.500" height="2.500" /><rect x="8" y="8" width="2.500" height="2.500" /></Glyph></Cell>
                <VLine $h={18} $m="0 11px 0 0" />
                <Dots w={15} color="#333" />
              </MailActions>
              <MailDate>Fr, 31.10.2025 12:31</MailDate>
              <MailLink><span>mseekoeln.de/</span></MailLink>
              <Signature>Schmitz+Partner mbB<br />Steuerberatungsgesellschaft</Signature>
            </Mail>
          </Reading>
          <Scroll>
            <svg width="6" height="6" viewBox="0 0 6 6"><path d="M3 1l2.500 4h-5z" fill="#555" /></svg>
            <ScrollThumb />
            <Grow />
            <svg width="6" height="6" viewBox="0 0 6 6"><path d="M3 5L.5 1h5z" fill="#555" /></svg>
          </Scroll>
        </Panes>
      </Workspace>
    </AppBody>
  </>
);

/* Blurred privacy patch that hides the folder names */
const Redaction = styled.div`
  position: absolute;
  left: 91px;
  top: 400px;
  width: 223px;
  height: 521px;
  background:
    linear-gradient(0deg, rgba(104, 110, 150, .8), rgba(120, 122, 140, .3) 12px, rgba(130, 130, 135, 0) 26px),
    linear-gradient(90deg, rgba(160, 160, 160, 0) 200px, rgba(160, 160, 160, .4) 214px, rgba(195, 195, 195, .7) 223px),
    radial-gradient(ellipse 110px 80px at 110px 130px, rgba(122, 122, 122, .4), rgba(128, 128, 128, 0)),
    radial-gradient(ellipse 110px 60px at 110px 255px, rgba(122, 122, 122, .4), rgba(128, 128, 128, 0)),
    radial-gradient(ellipse 70px 26px at 185px 347px, rgba(116, 116, 116, .5), rgba(128, 128, 128, 0)),
    linear-gradient(180deg, #7d8185, #808283 40px, #838383 110px, #868686);
`;

/* ---------- settings dialog ---------- */

const Dialog = styled.div`
  position: absolute;
  left: 316px;
  top: 40px;
  width: 1280px;
  height: 844px;
  display: flex;
  background: #fff;
  border-radius: 4px;
  overflow: hidden;
`;
const DialogShadow = styled(Dialog)`
  overflow: visible;
  box-shadow: 0 26px 58px rgba(0, 0, 0, .24), 0 5px 14px rgba(0, 0, 0, .2);
`;
const Categories = styled.div`
  width: 220px;
  padding: 14px 0 0 10px;
  display: flex;
  flex-direction: column;
  background: #f4f4f4;
  border-right: 1px solid #ececec;
`;
const DialogTitle = styled.h2`
  margin: 0 0 12px 10px;
  font-size: 19.6px;
  line-height: 30px;
  letter-spacing: 0;
  font-weight: 600;
`;
const SettingsSearch = styled.div`
  width: 180px;
  height: 32px;
  margin: 0 0 12px 10px;
  padding: 0 0 1px 10px;
  display: flex;
  align-items: center;
  gap: 7px;
  background: #fff;
  border: 1px solid #d1d1d1;
  border-bottom-color: #616161;
  border-radius: 4px;
  letter-spacing: -0.17px;
  color: #616161;
`;
const NavRow = styled.div<{ $state?: 'on' | 'hover'; $gap: number }>`
  height: 32px;
  padding-bottom: 1px;
  display: flex;
  align-items: center;
  color: ${p => (p.$state ? '#242424' : '#424242')};
  ${p => p.$state === 'on' && strong}
  &::before {
    content: '';
    width: 3px;
    height: 16px;
    margin-right: ${p => p.$gap}px;
    border-radius: 2px;
    background: ${p => (p.$state === 'on' ? '#0f56a8' : p.$state === 'hover' ? '#c7c7c7' : 'transparent')};
  }
  & > svg { margin: 3px 9px 0 0; }
`;
const Subcategories = styled.div`
  width: 201px;
  padding: 18px 0 0 2px;
  background: #f4f4f4;
  border-right: 1px solid #ececec;
`;
const Content = styled.div`
  flex: 1;
  display: flex;
  flex-direction: column;
`;
const ContentHead = styled.div`
  height: 63px;
  flex: none;
  display: flex;
  align-items: center;
  justify-content: space-between;
  padding: 2px 24px 0 19px;
  border-bottom: 1px solid #ededed;
  font-size: 19.6px;
  letter-spacing: 0;
  font-weight: 600;
  & > svg { margin-bottom: 2px; }
`;
const Intro = styled.p`
  margin: 14px 0 0 19px;
  line-height: 20px;
  color: #616161;
`;
const ToggleRow = styled.div`
  height: 20px;
  margin: 22px 0 0 27px;
  display: flex;
  align-items: center;
  gap: 12px;
`;
const Toggle = styled.span`
  width: 40px;
  height: 20px;
  padding: 2px;
  border: 1px solid #616161;
  border-radius: 10px;
  &::before {
    content: '';
    display: block;
    width: 14px;
    height: 14px;
    border-radius: 50%;
    background: #616161;
  }
`;
const CheckRow = styled.div<{ $mt: number; $ml: number }>`
  height: 20px;
  margin: ${p => p.$mt}px 0 0 ${p => p.$ml}px;
  display: flex;
  align-items: center;
  gap: 12px;
  color: #bdbdbd;
`;
const Box = styled.span`
  width: 16px;
  height: 16px;
  border: 1px solid #d6d6d6;
  border-radius: 2px;
  display: flex;
  align-items: center;
  justify-content: center;
`;
const DateRow = styled.div<{ $mt: number }>`
  height: 32px;
  margin: ${p => p.$mt}px 0 0 47px;
  display: flex;
`;
const DateLabel = styled.span`
  width: 85px;
  line-height: 35px;
  color: #bdbdbd;
`;
const DateField = styled.span`
  width: 180px;
  margin-right: 8px;
  padding: 0 9px 0 8px;
  display: flex;
  align-items: center;
  justify-content: space-between;
  background: #f4f4f4;
  border-bottom: 1px solid #dedede;
  color: #424242;
`;
const TimeField = styled.span`
  width: 87px;
  height: 33px;
  margin-right: 5px;
  padding-left: 6px;
  line-height: 34px;
  border-bottom: 1px solid #dedede;
  color: #c8c8c8;
`;
const TimeArrow = styled.span`padding-top: 9px;`;

const subs = ['E-Mail-Konto', 'Für mich freigegeben', 'Automatische Antworten', 'Signaturen', 'Kategorien', 'Mobile Geräte', 'Speicher'];

const DateLine = ({ label, date, mt }: { label: string; date: string; mt: number }) => (
  <DateRow $mt={mt}>
    <DateLabel>{label}</DateLabel>
    <DateField>
      {date}
      <Glyph w={17} box="0 0 17 17" color="#cfcfcf">
        <path d="M.5 2.500h16v13.500H.5zM.5 5.500h16M4.500 .5v3M12.500 .5v3" />
        <path d="M3.500 8.500h10M3.500 11h10M3.500 13.500h10" strokeDasharray="1 1.500" strokeLinecap="butt" />
      </Glyph>
    </DateField>
    <TimeField>14:00</TimeField>
    <TimeArrow><Chevron w={13} color="#bdbdbd" sw={.8} /></TimeArrow>
  </DateRow>
);

const Settings = () => (
  <Dialog>
    <Categories>
      <DialogTitle>Einstellungen</DialogTitle>
      <SettingsSearch><Magnifier w={11} color="#555" />Einstellungen suchen</SettingsSearch>
      <NavRow $state="on" $gap={8}><svg width="18" height="18" viewBox="0 0 18 18" fill="#0f56a8"><circle cx="9" cy="5" r="4" /><path d="M4 10.500h10q2 0 2 2 0 5-7 5t-7-5q0-2 2-2z" /></svg>Konto</NavRow>
      <NavRow $gap={8}><Gear w={18} color="#424242" />Allgemein</NavRow>
      <NavRow $state="hover" $gap={8}><Glyph w={18} box="0 0 18 18" sw={1.100}><rect x="1.200" y="2.800" width="15.600" height="12.400" rx="2" /><path d="M1.500 5.500L9 10l7.500-4.500" /></Glyph>E-Mail</NavRow>
      <NavRow $gap={8}><Glyph w={18} box="0 0 18 18" color="#424242" sw={1.100}><rect x="2.200" y="2.200" width="13.600" height="13.600" rx="2.500" /><path d="M2.200 5.800h13.600" /><g fill="#424242" stroke="none"><circle cx="6" cy="9" r=".9" /><circle cx="9" cy="9" r=".9" /><circle cx="12" cy="9" r=".9" /><circle cx="6" cy="12.200" r=".9" /><circle cx="9" cy="12.200" r=".9" /></g></Glyph>Kalender</NavRow>
      <NavRow $gap={8}><Glyph w={18} box="0 0 18 18" color="#424242" sw={1.100}><circle cx="6" cy="5.500" r="2.800" /><circle cx="13.500" cy="6.500" r="1.900" /><path d="M2.300 10.500h7.400q1.300 0 1.300 1.300Q11 16 6 16T1 11.800q0-1.300 1.300-1.300zM12.500 10.500h3.500q1.300 0 1.300 1.300 0 3-4.500 2.700" /></Glyph>Personen</NavRow>
    </Categories>
    <Subcategories>
      {subs.map(s => <NavRow key={s} $gap={9} $state={s === 'Automatische Antworten' ? 'on' : undefined}>{s}</NavRow>)}
    </Subcategories>
    <Content>
      <ContentHead>Automatische Antworten<Cross w={17} color="#616161" sw={1.200} /></ContentHead>
      <Intro>
        Verwenden Sie automatische Antworten, um anderen mitzuteilen, dass Sie im Urlaub sind oder Ihre E-Mails zurzeit nicht<br />
        beantworten können. Sie können festlegen, dass Ihre Antworten an einem bestimmten Zeitpunkt beginnen und enden.<br />
        Andernfalls bleiben sie aktiviert, bis Sie sie deaktivieren.
      </Intro>
      <ToggleRow><Toggle />Automatische Antworten aktivieren</ToggleRow>
      <CheckRow $mt={30} $ml={27}><Box />Antworten nur in einem bestimmten Zeitraum senden</CheckRow>
      <DateLine label="Startzeit" date="03.11.2025" mt={16} />
      <DateLine label="Endzeit" date="04.11.2025" mt={13} />
      <CheckRow $mt={37} $ml={27}><Box><Glyph w={10} box="0 0 10 10" color="#bdbdbd" sw={1.400}><path d="M1.500 5.500L4 8l4.500-6" /></Glyph></Box>Antworten an Personen außerhalb Ihrer Organisation senden</CheckRow>
      <CheckRow $mt={12} $ml={55}><Box />Antworten nur an Kontakte senden</CheckRow>
    </Content>
  </Dialog>
);

/* ---------- taskbar ---------- */

const Taskbar = styled.div`
  height: 48px;
  flex: none;
  margin-top: 4px;
  display: flex;
  align-items: center;
  padding: 0 19px 0 11px;
  border-top: 1px solid #5560a0;
  background: linear-gradient(90deg, #374fb3 0, #3a51b8 350px, #2039b2 400px, #152fa8 540px, #1a36b4 630px, #142ca4 700px, #1a37b4 860px, #1530a8 1000px, #152c9e 1110px, #1733b2 1260px, #142a9c 1350px, #14289a 1440px, #3549b2 1495px, #374fb5 1920px);
`;
const TaskItem = styled.div<{ $dot?: 'wide' | 'small' }>`
  position: relative;
  width: 44px;
  height: 46px;
  display: flex;
  align-items: center;
  justify-content: center;
  ${p => p.$dot && css`
    &::after {
      content: '';
      position: absolute;
      bottom: 3px;
      width: ${p.$dot === 'wide' ? 16 : 6}px;
      height: 3px;
      border-radius: 2px;
      background: ${p.$dot === 'wide' ? '#a8bdf5' : '#a3abd8'};
    }
  `}
  ${p => p.$dot === 'wide' && css`
    width: 40px;
    height: 40px;
    margin: 0 2px;
    border-radius: 4px;
    background: rgba(255, 255, 255, .1);
    &::after { bottom: 1px; }
  `}
`;
const Count = styled.span`
  position: absolute;
  left: 23px;
  top: 6px;
  width: 16px;
  height: 14px;
  border-radius: 7px;
  background: #c42b1c;
  color: #fff;
  font-size: 10px;
  line-height: 14px;
  text-align: center;
`;
const Clock = styled.div`
  text-align: right;
  font-size: 11.5px;
  letter-spacing: -0.3px;
  line-height: 16px;
  padding-bottom: 1px;
  color: #dde2f6;
`;

const Tasks = () => (
  <Taskbar>
    <TaskItem>
      <svg width="23" height="23" viewBox="0 0 23 23">
        <defs><linearGradient id="win" x1="0" y1="0" x2="1" y2="1"><stop offset="0" stopColor="#7fdcff" /><stop offset="1" stopColor="#149bf5" /></linearGradient></defs>
        <path d="M0 0h11v11H0zM12 0h11v11H12zM0 12h11v11H0zM12 12h11v11H12z" fill="url(#win)" />
      </svg>
    </TaskItem>
    <TaskItem><Glyph w={22} box="0 0 22 22" color="#e8ebf7" sw={2.200}><circle cx="9.500" cy="9.500" r="8.200" fill="#6277c8" /><path d="M15.500 15.500l5.200 5.200" /></Glyph></TaskItem>
    <TaskItem>
      <svg width="24" height="22" viewBox="0 0 24 22"><path d="M0 2q0-1.500 1.500-1.500H8L10.500 3H0z" fill="#d79b14" /><path d="M0 3h24v17q0 1.500-1.500 1.500h-21Q0 21.500 0 20z" fill="#fcc93c" /><path d="M4 21.500v-5q0-2 2-2h11q2 0 2 2v5z" fill="#1283cc" /><path d="M8.500 18h6" stroke="#0a5a9e" strokeWidth="1.500" /></svg>
    </TaskItem>
    <TaskItem $dot="wide">
      <svg width="25" height="25" viewBox="0 0 25 25">
        <defs><linearGradient id="edg" x1="0" y1="0" x2="1" y2=".4"><stop offset="0" stopColor="#1a9fe0" /><stop offset="1" stopColor="#5be05a" /></linearGradient></defs>
        <circle cx="12.500" cy="12.500" r="11.500" fill="#1266b8" />
        <path d="M1 12A11.500 11.500 0 0 1 24 12q0 4.500-5 4.500-4 0-4-2.200 1.200-1 .8-2.600Q14.500 9 11 9 4.500 9 1 12z" fill="url(#edg)" />
        <path d="M11 9q4.500.3 4.800 3.500.2 1-.8 2-.3 5 6.500 5-4 5-10 4Q6 20 7 14q1-4 4-5z" fill="#0d4f9a" />
        <rect x="0" y="15.500" width="12.500" height="8.500" rx="1" fill="#c9760e" /><path d="M0 19h12.500M4 15.500V14h4.500v1.500" stroke="#8a4a05" fill="none" /><rect x="5.500" y="18" width="1.500" height="2.500" fill="#f5d080" />
      </svg>
    </TaskItem>
    <TaskItem $dot="small">
      <svg width="26" height="24" viewBox="0 0 26 24"><circle cx="11" cy="4.500" r="3.800" fill="#6f74e8" /><circle cx="19" cy="6" r="2.800" fill="#8a6fe8" /><path d="M15 9.500h8.500v7a6 6 0 0 1-8.500 5z" fill="#7a4ff0" /><path d="M5.500 9.500H17v7.500a5.700 5.700 0 0 1-11.500 0z" fill="#8f93f5" /><rect x="1" y="10.500" width="10.500" height="10" rx="1.800" fill="#3f3fc0" /><path d="M3.800 13.200h5M6.300 13.200v5" stroke="#fff" strokeWidth="1.400" /></svg>
      <Count>9+</Count>
    </TaskItem>
    <TaskItem $dot="small">
      <svg width="24" height="20" viewBox="0 0 24 20"><rect x="1" y="1" width="22" height="14.500" rx="1" fill="#2b86c8" stroke="#2a4560" /><path d="M2 2h20L2 15z" fill="#4aa8e4" /><path d="M10.500 16h3v2h2.500v1.200H8V18h2.500z" fill="#1b2b4a" /></svg>
    </TaskItem>
    <TaskItem $dot="small">
      <svg width="24" height="24" viewBox="0 0 24 24"><rect width="24" height="24" rx="3" fill="#060b50" /><circle cx="12" cy="12" r="9.800" fill="#fff" /><path d="M4 12l4.500-3.500v2.300h7V8.500L20 12l-4.500 3.500v-2.300h-7v2.300z" fill="#060b50" /></svg>
    </TaskItem>
    <Grow />
    <Clock>14:10<br />03.11.2025</Clock>
  </Taskbar>
);

export default function App() {
  return (
    <Page>
      <Global />
      <Browser />
      <AppFrame>
        <Outlook />
        <Shade />
        <DialogShadow />
        <Redaction />
        <Settings />
      </AppFrame>
      <Tasks />
    </Page>
  );
}
